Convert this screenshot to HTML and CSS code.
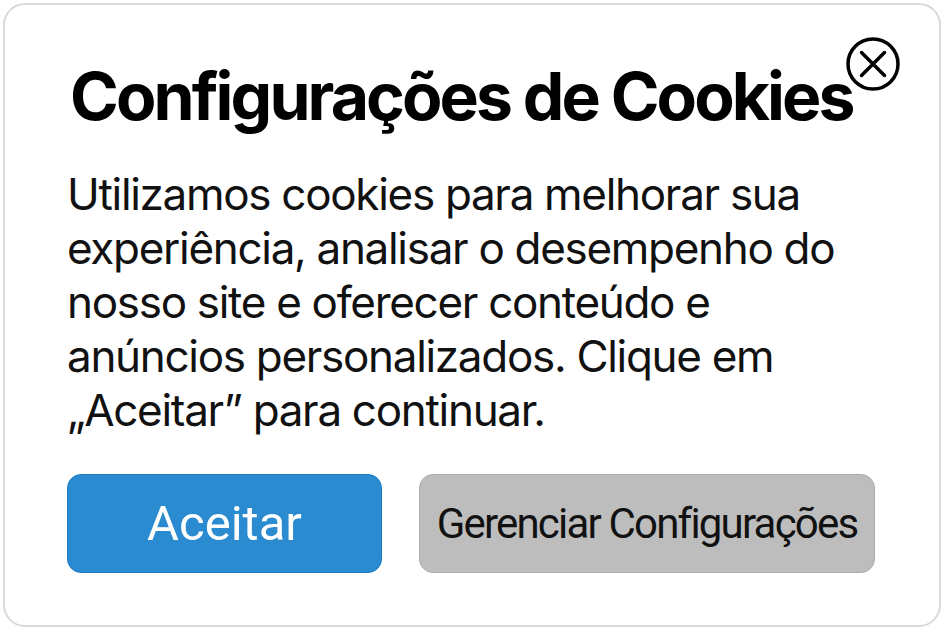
FILE: index.html
```html
<!DOCTYPE html>
<html lang="pt">
<head>
    <meta charset="UTF-8">
    <title>Configurações de Cookies</title>
    <link rel="stylesheet" href="styles.css">
</head>
<body>
    <div class="cookie-card">
        <button class="close-btn" aria-label="Fechar">
            <svg width="56" height="56" viewBox="0 0 56 56">
                <circle cx="28" cy="28" r="25" fill="none" stroke="#000" stroke-width="3.5"/>
                <path d="M16.5 16.5 L39.5 39.5 M39.5 16.5 L16.5 39.5" stroke="#000" stroke-width="3.5" stroke-linecap="round"/>
            </svg>
        </button>
        <h1 class="title">Configurações de Cookies</h1>
        <p class="message">Utilizamos cookies para melhorar sua experiência, analisar o desempenho do nosso site e oferecer conteúdo e anúncios personalizados. Clique em „Aceitar” para continuar.</p>
        <div class="button-row">
            <button class="btn btn-accept">Aceitar</button>
            <button class="btn btn-manage">Gerenciar Configurações</button>
        </div>
    </div>
</body>
</html>
```

FILE: styles.css
```css
body {
    margin: 0;
    background: #ffffff;
    font-family: "Inter", "Roboto", sans-serif;
}

/* Card */
.cookie-card {
    position: relative;
    box-sizing: border-box;
    width: 938px;
    height: 624px;
    margin: 3px 0 0 3px;
    border: 2px solid #d9d9d9;
    border-radius: 22px;
    padding: 51px 60px 0 62px;
}

.close-btn {
    position: absolute;
    top: 31px;
    right: 38px;
    padding: 0;
    border: none;
    background: none;
    cursor: pointer;
}

.close-btn svg {
    display: block;
}

.title {
    margin: 0;
    padding-left: 3px;
    font-size: 66px;
    font-weight: 700;
    line-height: 80px;
    color: #000;
    letter-spacing: -2.9px;
}

.message {
    margin: 31px 0 0 0;
    font-size: 44px;
    line-height: 54px;
    color: #111;
    letter-spacing: -1.3px;
    max-width: 800px;
}

/* Buttons */
.button-row {
    display: flex;
    gap: 37px;
    margin-top: 37px;
}

.btn {
    height: 99px;
    border-radius: 14px;
    font-family: "Roboto", sans-serif;
    cursor: pointer;
}

.btn-accept {
    width: 315px;
    background: #2a8bd0;
    border: 1px solid #1f7cc4;
    color: #fff;
    font-size: 49px;
}

.btn-manage {
    width: 456px;
    background: #bdbdbd;
    border: 1px solid #acacac;
    color: #111;
    font-size: 42px;
    letter-spacing: -1.8px;
}
```
